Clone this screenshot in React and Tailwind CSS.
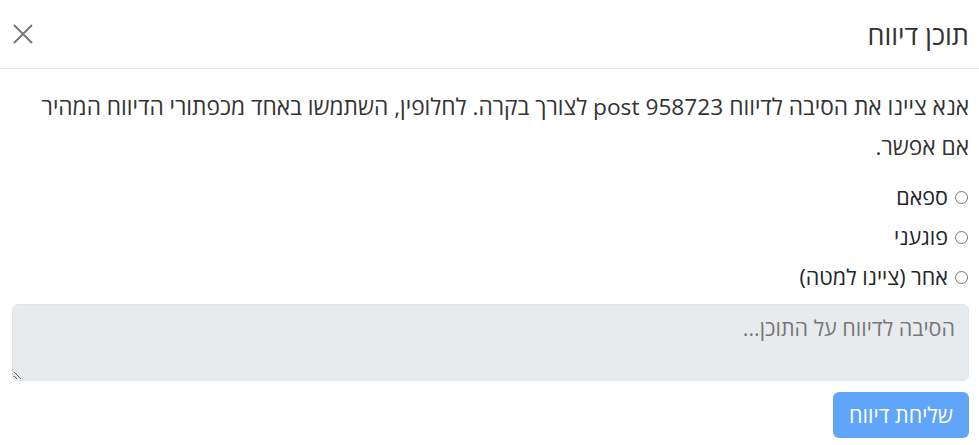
import { useState } from "react";

const reasons = [
  { id: "spam", label: "ספאם" },
  { id: "offensive", label: "פוגעני" },
  { id: "other", label: "אחר (ציינו למטה)" },
];

export default function App() {
  const [reason, setReason] = useState("");
  const [details, setDetails] = useState("");

  return (
    <div dir="rtl" className="w-[979px] h-[445px] bg-white text-[#212529] font-['Open_Sans','Noto_Sans','Liberation_Sans',sans-serif]">
      <div className="flex items-center justify-between h-[69px] pr-[10px] pl-[12px] border-b border-[#e5e7eb]">
        <h2 className="text-[27px] leading-none text-[#333]">תוכן דיווח</h2>
        <button className="text-[#777]" aria-label="סגירה">
          <svg width="22" height="22" viewBox="0 0 22 22" stroke="currentColor" strokeWidth="2" fill="none">
            <path d="M2 2L20 20M20 2L2 20" />
          </svg>
        </button>
      </div>

      <div className="px-[10px] pt-[18px]">
        <p className="pl-[12px] text-[22.7px] leading-[40px] text-[#333]">
          אנא ציינו את הסיבה לדיווח post 958723 לצורך בקרה. לחלופין, השתמשו באחד מכפתורי הדיווח המהיר אם אפשר.
        </p>

        <div className="mt-[15px] flex flex-col gap-[10px] pr-[1px]">
          {reasons.map(r => (
            <label key={r.id} className="flex items-center gap-[7px] h-[30px] text-[21.5px] text-[#212529] cursor-pointer">
              <input
                type="radio"
                name="reason"
                checked={reason === r.id}
                onChange={() => setReason(r.id)}
                className="w-[13px] h-[13px] m-0"
              />
              <span>{r.label}</span>
            </label>
          ))}
        </div>

        <textarea
          value={details}
          onChange={e => setDetails(e.target.value)}
          placeholder="הסיבה לדיווח על התוכן..."
          className="mt-[12px] block w-[957px] h-[77px] rounded-md bg-[#e8ebee] border border-[#e2e5e8] px-[13px] py-[8px] text-[21.5px] leading-[30px] placeholder:text-[#777] outline-none"
        />

        <div className="mt-[11px] flex">
          <button className="h-[46px] w-[136px] rounded-md bg-[#60a5fa] text-white text-[21.5px]">
            שליחת דיווח
          </button>
        </div>
      </div>
    </div>
  );
}
